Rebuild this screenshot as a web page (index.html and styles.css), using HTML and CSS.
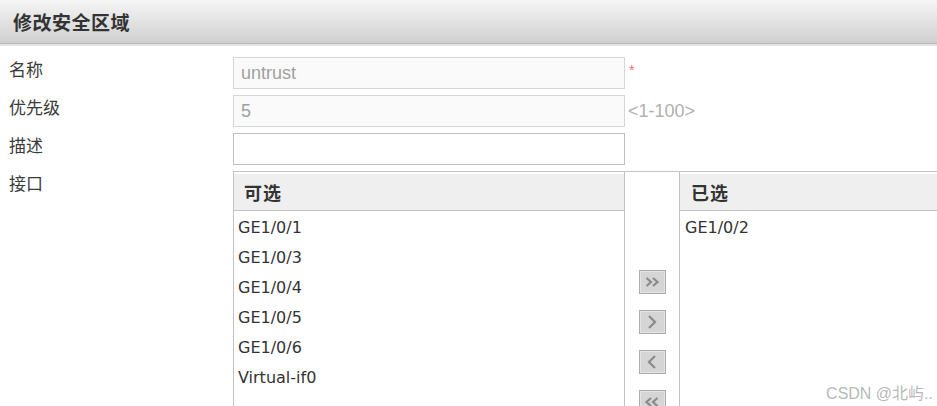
FILE: index.html
```html
<!DOCTYPE html>
<html lang="zh-CN">
<head>
<meta charset="utf-8">
<title>修改安全区域</title>
<link rel="stylesheet" href="styles.css">
</head>
<body>
<div class="header"><h1 class="title">修改安全区域</h1></div>
<div class="form">
  <div class="row">
    <label class="label">名称</label>
    <div class="input disabled">untrust</div>
    <span class="required">*</span>
  </div>
  <div class="row">
    <label class="label">优先级</label>
    <div class="input disabled">5</div>
    <span class="hint">&lt;1-100&gt;</span>
  </div>
  <div class="row">
    <label class="label">描述</label>
    <div class="input"></div>
  </div>
  <div class="row row-list">
    <label class="label">接口</label>
    <div class="transfer">
      <div class="box box-left">
        <div class="box-head">可选</div>
        <ul class="items">
          <li>GE1/0/1</li>
          <li>GE1/0/3</li>
          <li>GE1/0/4</li>
          <li>GE1/0/5</li>
          <li>GE1/0/6</li>
          <li>Virtual-if0</li>
        </ul>
      </div>
      <div class="ops">
        <button class="btn" type="button"><svg width="16" height="12" viewBox="0 0 16 12"><path d="M2.5 2 L7 6 L2.5 10 M9 2 L13.5 6 L9 10" fill="none" stroke="#8a8a8a" stroke-width="2.2"/></svg></button>
        <button class="btn" type="button"><svg width="14" height="16" viewBox="0 0 14 16"><path d="M4 2 L10 8 L4 14" fill="none" stroke="#8a8a8a" stroke-width="2.2"/></svg></button>
        <button class="btn" type="button"><svg width="14" height="16" viewBox="0 0 14 16"><path d="M10 2 L4 8 L10 14" fill="none" stroke="#8a8a8a" stroke-width="2.2"/></svg></button>
        <button class="btn" type="button"><svg width="16" height="12" viewBox="0 0 16 12"><path d="M7 2 L2.5 6 L7 10 M13.5 2 L9 6 L13.5 10" fill="none" stroke="#8a8a8a" stroke-width="2.2"/></svg></button>
      </div>
      <div class="box box-right">
        <div class="box-head">已选</div>
        <ul class="items">
          <li>GE1/0/2</li>
        </ul>
      </div>
    </div>
  </div>
</div>
<div class="watermark">CSDN @北屿..</div>
</body>
</html>
```
FILE: styles.css
```css
html, body {
  margin: 0;
  padding: 0;
  background: #fff;
  overflow: hidden;
}
body {
  width: 937px;
  height: 406px;
  position: relative;
  font-family: "Noto Sans CJK SC", "Liberation Sans", sans-serif;
  color: #333;
}
.header {
  height: 43px;
  border-bottom: 1px solid #b9b9b9;
  box-shadow: 0 2px 0 #e3e3e3;
  background: linear-gradient(#f5f5f5, #d0d0d0);
  display: flex;
  align-items: center;
  padding-left: 13px;
}
.title {
  margin: 0;
  font-size: 19px;
  font-weight: bold;
  letter-spacing: 0.5px;
  color: #333;
  line-height: 1;
}
.form {
  margin-top: 13px;
  display: flex;
  flex-direction: column;
  gap: 6px;
}
.row {
  display: flex;
  align-items: center;
}
.row-list {
  align-items: flex-start;
}
.label {
  flex: none;
  width: 224px;
  padding-left: 9px;
  align-self: flex-start;
  font-size: 17px;
  line-height: 22px;
  padding-top: 1px;
  color: #3a3a3a;
}
.input {
  flex: none;
  box-sizing: border-box;
  width: 392px;
  height: 32px;
  border: 1px solid #bfbfbf;
  background: #fff;
  font-family: "Liberation Sans", Arial, sans-serif;
  font-size: 18px;
  line-height: 30px;
  padding-left: 7px;
  color: #a0a0a0;
}
.input.disabled {
  border-color: #d6d6d6;
  background: #fafafa;
}
.required {
  align-self: flex-start;
  margin-left: 4px;
  margin-top: 6px;
  color: #f07070;
  font-family: "Liberation Sans", sans-serif;
  font-size: 14px;
  line-height: 14px;
}
.hint {
  margin-left: 3px;
  font-family: "Liberation Sans", Arial, sans-serif;
  font-size: 18px;
  color: #b0b0b0;
}
.transfer {
  flex: none;
  display: flex;
  height: 240px;
}
.box {
  flex: none;
  box-sizing: border-box;
  border-top: 1px solid #c2c2c2;
  border-left: 1px solid #c2c2c2;
}
.box-left {
  width: 392px;
  border-right: 1px solid #c2c2c2;
}
.box-right {
  width: 258px;
}
.box-head {
  margin-top: 2px;
  height: 36px;
  line-height: 36px;
  background: #efefef;
  border-bottom: 1px solid #c2c2c2;
  padding-left: 10px;
  font-size: 18px;
  font-weight: bold;
  letter-spacing: 1px;
  color: #333;
}
.box-right .box-head {
  padding-left: 11px;
}
.items {
  list-style: none;
  margin: 0;
  padding: 2px 0 0 4px;
  font-family: "DejaVu Sans", Verdana, sans-serif;
  font-size: 16px;
  line-height: 30px;
  color: #333;
}
.box-right .items {
  padding-left: 5px;
}
.ops {
  flex: none;
  width: 54px;
  border-top: 1px solid #c2c2c2;
  display: flex;
  flex-direction: column;
  align-items: center;
  padding-top: 98px;
  gap: 16px;
}
.btn {
  flex: none;
  box-sizing: border-box;
  width: 27px;
  height: 24px;
  padding: 0;
  margin: 0;
  border: 1px solid #acacac;
  box-shadow: inset 0 0 0 1px #e4e4e4;
  background: #d5d5d5;
  display: flex;
  align-items: center;
  justify-content: center;
}
.watermark {
  position: absolute;
  right: 4px;
  top: 380px;
  font-family: "Liberation Sans", "Noto Sans CJK SC", sans-serif;
  font-size: 16px;
  color: #b8b8b8;
}
```
